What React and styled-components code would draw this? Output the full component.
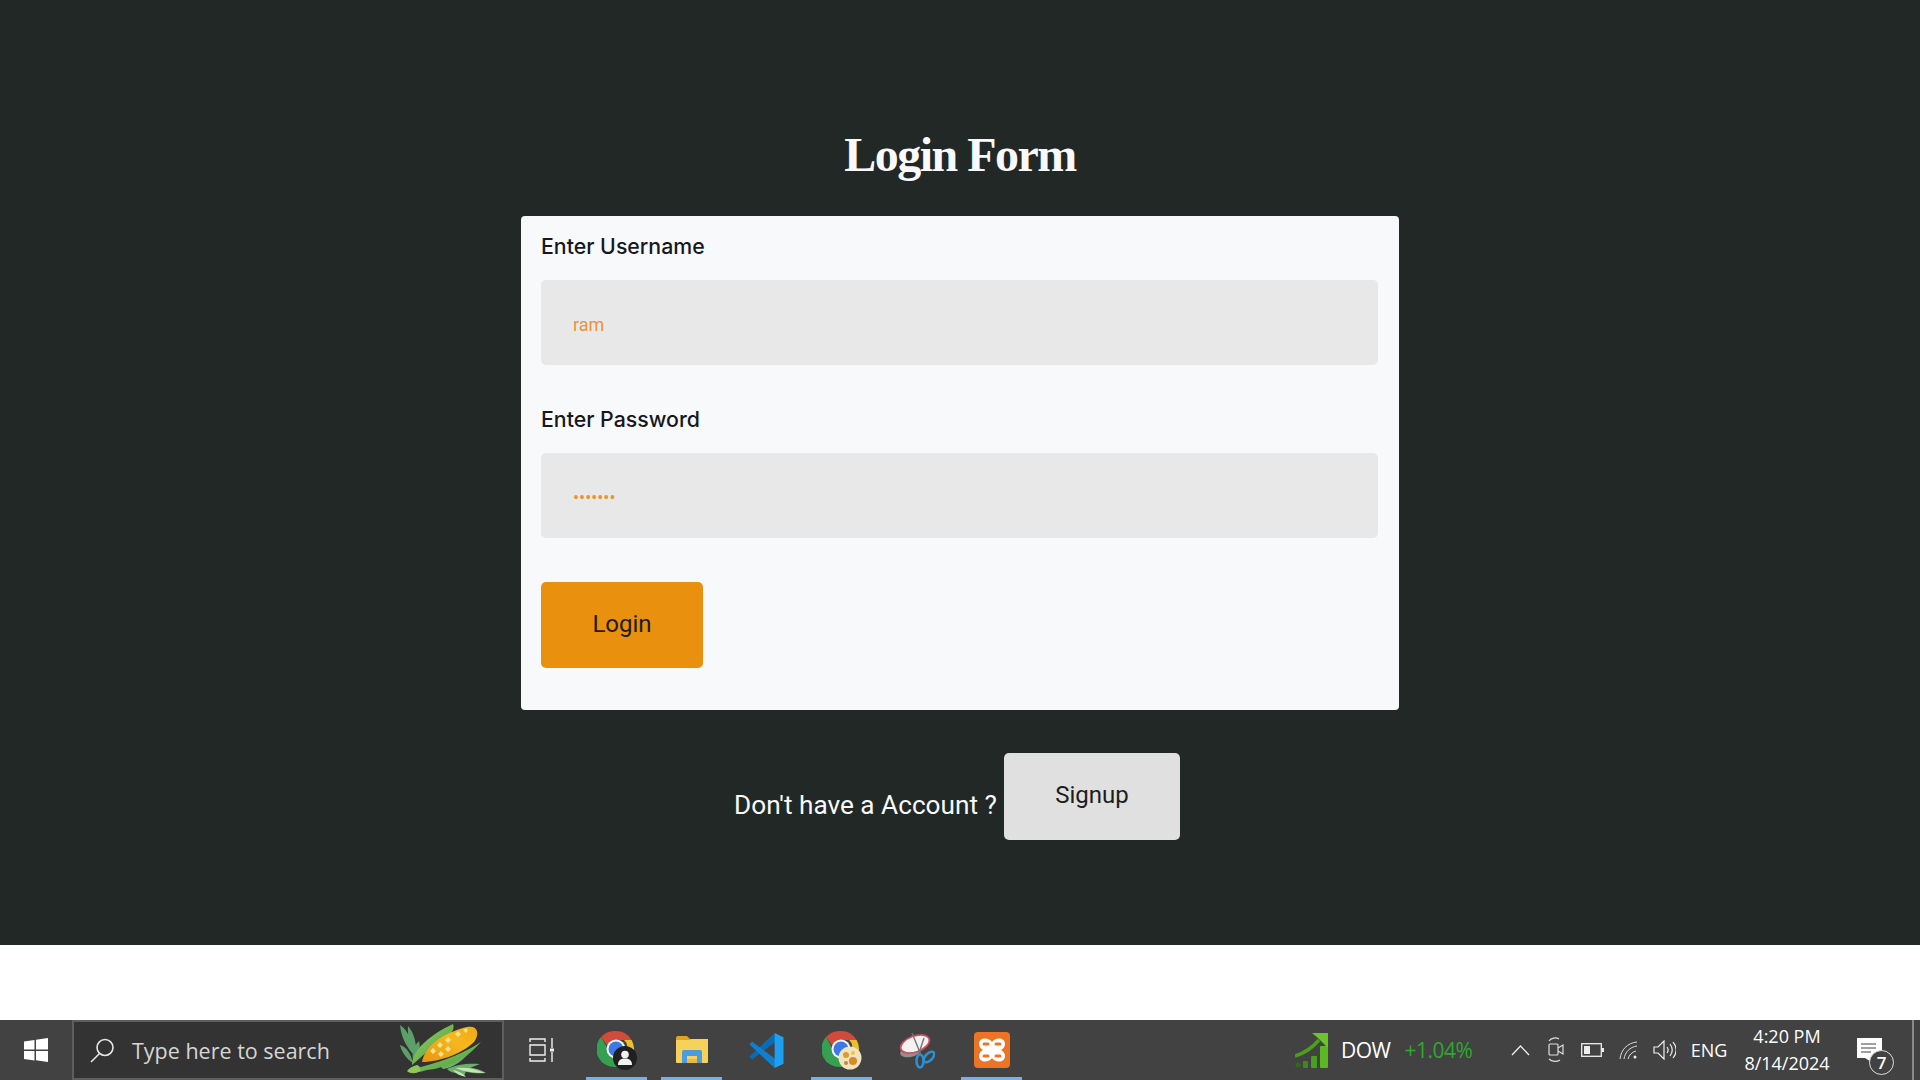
import styled, { createGlobalStyle } from "styled-components";

const GlobalStyle = createGlobalStyle`
  html, body {
    margin: 0;
    padding: 0;
    background: #fff;
  }
  * {
    box-sizing: border-box;
  }
`;

const Screen = styled.div`
  display: flex;
  flex-direction: column;
  width: 1920px;
  height: 1080px;
  overflow: hidden;
  background: #fff;
`;

const Page = styled.main`
  display: flex;
  flex-direction: column;
  align-items: center;
  height: 945px;
  padding-top: 125px;
  background: #222826;
`;

const Title = styled.h1`
  margin: 0 0 31px;
  height: 60px;
  font-family: "Liberation Serif", serif;
  font-weight: 700;
  font-size: 48px;
  line-height: 60px;
  letter-spacing: -1.5px;
  color: #f8f9fa;
`;

const Card = styled.form`
  display: flex;
  flex-direction: column;
  align-items: flex-start;
  width: 878px;
  padding: 14px 20px 42px;
  background: #f8f9fb;
  border-radius: 4px;
`;

const Label = styled.label`
  height: 32px;
  margin-bottom: 18px;
  font-family: Inter, sans-serif;
  font-weight: 500;
  font-size: 21.3px;
  line-height: 32px;
  color: #16181d;
`;

const Input = styled.input`
  display: block;
  width: 837px;
  height: 85px;
  margin-bottom: ${(p) => p.$gap}px;
  padding: 4px 32px 0;
  border: 0;
  outline: 0;
  border-radius: 5px;
  background: #e8e8e8;
  font-family: Roboto, sans-serif;
  font-size: 18px;
  color: #e8943a;
`;

const Button = styled.button`
  width: ${(p) => p.$width}px;
  height: ${(p) => p.$height}px;
  padding: 0 0 ${(p) => p.$lift}px;
  border: 0;
  border-radius: 5px;
  background: ${(p) => p.$bg};
  font-family: Roboto, sans-serif;
  font-size: 24px;
  color: #1d1d1b;
`;

const SignupRow = styled.div`
  display: flex;
  align-items: center;
  gap: 7px;
  margin-top: 43px;
  padding-right: 6px;
`;

const SignupText = styled.span`
  padding-top: 16px;
  font-family: Roboto, sans-serif;
  font-size: 26.2px;
  line-height: 32px;
  color: #f8f9fa;
`;

const Gap = styled.div`
  height: 75px;
`;

const Taskbar = styled.footer`
  display: flex;
  align-items: stretch;
  height: 60px;
  background: #424242;
  color: #fff;
`;

const StartButton = styled.div`
  display: flex;
  align-items: center;
  justify-content: center;
  width: 72px;
`;

const SearchBox = styled.div`
  display: flex;
  align-items: center;
  width: 432px;
  padding-left: 16px;
  border: 2px solid #5e5e5e;
  background: #333;
`;

const SearchText = styled.span`
  flex: 1;
  margin-left: 17px;
  font-family: "Open Sans", sans-serif;
  font-size: 21.5px;
  color: #d6d6d6;
`;

const CornWrap = styled.div`
  display: flex;
  margin-right: 7px;
`;

const TaskSlot = styled.div`
  position: relative;
  display: flex;
  align-items: center;
  justify-content: center;
  width: ${(p) => p.$width || 75}px;
  &::after {
    content: "";
    display: ${(p) => (p.$open ? "block" : "none")};
    position: absolute;
    left: 7px;
    right: 7px;
    bottom: 0;
    height: 3px;
    background: #76b0e8;
  }
`;

const Tray = styled.div`
  display: flex;
  align-items: stretch;
  margin-left: auto;
`;

const Widget = styled.div`
  display: flex;
  align-items: center;
  width: 217px;
  padding-left: 10px;
  font-family: "Open Sans", sans-serif;
  font-size: 21px;
`;

const WidgetName = styled.span`
  margin-left: 12px;
  letter-spacing: -0.5px;
`;

const WidgetValue = styled.span`
  margin-left: 14px;
  color: #2ea82e;
  letter-spacing: -0.5px;
`;

const TrayIcon = styled.div`
  display: flex;
  align-items: center;
  justify-content: center;
  width: ${(p) => p.$width || 36}px;
  font-family: "Open Sans", sans-serif;
  font-size: 18px;
`;

const Clock = styled.div`
  display: flex;
  flex-direction: column;
  align-items: center;
  justify-content: center;
  width: 102px;
  font-family: "Open Sans", sans-serif;
  font-size: 18px;
  line-height: 27px;
`;

const Notify = styled.div`
  position: relative;
  width: 74px;
  padding: 18px 0 0 19px;
`;

const Badge = styled.span`
  position: absolute;
  left: 31px;
  top: 30px;
  display: flex;
  align-items: center;
  justify-content: center;
  width: 25px;
  height: 25px;
  border: 1.5px solid #ddd;
  border-radius: 50%;
  background: #424242;
  font-family: "Open Sans", sans-serif;
  font-size: 17px;
  font-weight: 600;
`;

const DesktopEdge = styled.div`
  width: 2px;
  margin-right: 6px;
  background: #8a8a8a;
`;

function WindowsLogo() {
  return (
    <svg width="24" height="24" viewBox="0 0 24 24" fill="#fff">
      <path d="M0 3.5 10.5 2v9.6H0zM12 1.8 24 0v11.6H12zM0 13h10.5v9.5L0 21zM12 13h12v11l-12-1.8z" />
    </svg>
  );
}

function SearchGlass() {
  return (
    <svg width="25" height="25" viewBox="0 0 25 25" fill="none" stroke="#e6e6e6" strokeWidth="1.6">
      <circle cx="15" cy="9.5" r="8" />
      <path d="M9.5 15.5 1 24" />
    </svg>
  );
}

function Corn() {
  return (
    <svg width="100" height="60" viewBox="0 0 100 60">
      <defs>
        <linearGradient id="cob" x1="0" y1="1" x2="1" y2="0">
          <stop offset="0" stopColor="#e8960f" />
          <stop offset="0.6" stopColor="#f5b81e" />
          <stop offset="1" stopColor="#f0a818" />
        </linearGradient>
        <linearGradient id="husk" x1="0" y1="0" x2="1" y2="1">
          <stop offset="0" stopColor="#9fd36a" />
          <stop offset="1" stopColor="#3f9a3c" />
        </linearGradient>
      </defs>
      <path d="M5 5c8 5 12 16 14 30-7-7-13-18-14-30zM13 6c6 7 9 17 8 30-5-8-9-19-8-30zM5 25c7 2 11 9 13 18-6-4-11-10-13-18zM24 21c2 7 0 14-5 22-3-8-1-16 5-22z" fill="#5c9f68" />
      <path d="M17 45C17 30 36 14 58 4c3 7-5 12-14 18-10 8-18 15-27 23z" fill="url(#husk)" />
      <path d="M27 42C30 25 50 12 72 7c11-2 13 7 7 15C68 33 45 42 27 42z" fill="url(#cob)" />
      <path d="M38 28l3 3-3 3-3-3zM45 22l3 3-3 3-3-3zM46 31l3 3-3 3-3-3zM53 17l3 3-3 3-3-3zM53 26l3 3-3 3-3-3zM63 11l3 3-3 3-3-3zM71 8l2 2-2 3-3-3z" fill="#f9e08a" />
      <path d="M56 38c8-3 16-9 23-9l-12 11c-5 4-11 8-19 9l-3-3zM52 49c10-5 22-6 33-5l-13 5-3 7-7-3c-3 0-7-1-10-4zM60 47c10 0 22 0 31 6-10 1-22 0-31-6z" fill="#6cae6a" />
      <path d="M60 48c10-1 20 0 30 5-10 0-20-1-30-5zM58 50c5 1 10 3 13 7-5-1-10-3-13-7z" fill="#c4e4b8" />
      <path d="M13 50C28 47 60 39 86 22 72 38 52 48 32 50c-6 2-13 4-19 0z" fill="url(#husk)" />
      <path d="M12 51c2-3 6-5 10-6 3 1 4 4 3 6-4 3-10 3-13 0z" fill="#8ec95c" />
    </svg>
  );
}

function TaskView() {
  return (
    <svg width="26" height="24" viewBox="0 0 26 24" fill="none" stroke="#f0f0f0" strokeWidth="1.4">
      <path d="M1 4V1h15v3M1 20v3h15v-3M1 7h15v10H1zM23 0v10M23 14v10" />
      <rect x="21" y="10.5" width="4" height="3" fill="#f0f0f0" stroke="none" />
    </svg>
  );
}

function Chrome({ badge }) {
  return (
    <svg width="40" height="40" viewBox="0 0 40 40">
      <path d="M19 1a18 18 0 0 1 15.6 9H19a9 9 0 0 0-8.4 6L4 7A18 18 0 0 1 19 1z" fill="#d24a3c" />
      <path d="M34.6 10A18 18 0 0 1 21 37l7-14a9 9 0 0 0-1-13z" fill="#edbf2c" />
      <path d="M4 7l8 14a9 9 0 0 0 9 7l-1 9h-1A18 18 0 0 1 4 7z" fill="#359f52" />
      <circle cx="19" cy="19" r="9.5" fill="#f6f6f6" />
      <circle cx="19" cy="19" r="7.5" fill="#3d78e6" />
      {badge === "person" ? (
        <g>
          <circle cx="28" cy="28" r="12" fill="#202020" />
          <circle cx="28" cy="24.5" r="3.8" fill="#f2f2f2" />
          <path d="M21 35c0-5 3-6.5 7-6.5s7 1.5 7 6.5z" fill="#f2f2f2" />
        </g>
      ) : (
        <g>
          <circle cx="28" cy="28" r="11.5" fill="#efe3c0" />
          <circle cx="24" cy="25" r="3" fill="#e09a2a" />
          <circle cx="31" cy="31" r="4" fill="#d98a22" />
          <circle cx="31" cy="23" r="2" fill="#f2c14a" />
          <circle cx="24" cy="33" r="2" fill="#c9882e" />
        </g>
      )}
    </svg>
  );
}

function FolderIcon() {
  return (
    <svg width="32" height="28" viewBox="0 0 32 28">
      <path d="M0 2a2 2 0 0 1 2-2h9l3 3h18v5H0z" fill="#dfa51f" />
      <path d="M0 4h13l3-1h16v23a1 1 0 0 1-1 1H1a1 1 0 0 1-1-1z" fill="#f7d25a" />
      <path d="M6 27V16a2 2 0 0 1 2-2h16a2 2 0 0 1 2 2v11h-5v-7H11v7z" fill="#4a9be0" />
      <rect x="11" y="23" width="10" height="4" fill="#e9b93d" />
    </svg>
  );
}

function VsCode() {
  return (
    <svg width="37" height="37" viewBox="0 0 100 100">
      <path d="M72 3 4 66l7 8L74 27z" fill="#0a6cb5" />
      <path d="M4 34l7-8 63 47-2 24z" fill="#107fcf" />
      <path d="M72 3l24 11v72L72 97z" fill="#1f9ff0" />
    </svg>
  );
}

function Snip() {
  return (
    <svg width="36" height="38" viewBox="0 0 36 38" fill="none">
      <ellipse cx="11" cy="21" rx="10" ry="5" transform="rotate(-10 11 21)" fill="#8f8f8f" />
      <ellipse cx="16" cy="13" rx="15" ry="8" transform="rotate(-20 16 13)" fill="#f4f1f1" stroke="#c9505f" strokeWidth="1.8" />
      <path d="M13 2l9 22M25 7l-6 18" stroke="#777" strokeWidth="1.4" />
      <ellipse cx="21" cy="30" rx="3.5" ry="6.5" stroke="#2b8fd0" strokeWidth="2.6" />
      <ellipse cx="30" cy="26" rx="3.5" ry="6.5" transform="rotate(45 30 26)" stroke="#2b8fd0" strokeWidth="2.6" />
    </svg>
  );
}

function Xampp() {
  return (
    <svg width="36" height="36" viewBox="0 0 36 36" fill="none">
      <rect width="36" height="36" rx="4" fill="#ec7424" />
      <path d="M18 10c3-5 13-5 13 2 0 3-2 5-4 6 2 1 4 3 4 6 0 7-10 7-13 2-3 5-13 5-13-2 0-3 2-5 4-6-2-1-4-3-4-6 0-7 10-7 13-2z" fill="#fff" />
      <path d="M10 12h4M22 12h4M10 24h4M22 24h4" stroke="#ec7424" strokeWidth="3" strokeLinecap="round" />
    </svg>
  );
}

function DowArrow() {
  return (
    <svg width="34" height="36" viewBox="0 0 34 36">
      <circle cx="3" cy="33" r="2.5" fill="#2c6b14" />
      <rect x="8" y="29" width="5" height="7" rx="1" fill="#3c8a1a" />
      <rect x="16" y="24" width="6" height="12" rx="1" fill="#46a01c" />
      <rect x="25" y="14" width="8" height="22" rx="1" fill="#5ab922" />
      <path d="M0 24C10 21 18 15 24 8" fill="none" stroke="#4c9e1c" strokeWidth="3.5" />
      <path d="M17 1h16v15l-5-5-5-5z" fill="#6cc42a" />
    </svg>
  );
}

function Chevron() {
  return (
    <svg width="19" height="11" viewBox="0 0 19 11" fill="none" stroke="#eee" strokeWidth="1.3">
      <path d="M1 10 9.5 1 18 10" />
    </svg>
  );
}

function MeetNow() {
  return (
    <svg width="18" height="26" viewBox="0 0 18 26" fill="none" stroke="#ddd" strokeWidth="1.2">
      <path d="M2 4C4 1 9 0 12 2M2 22c3 3 8 3 11 1" />
      <rect x="2" y="7" width="9" height="11" rx="1" />
      <path d="M11 11l5-3v9l-5-3" />
    </svg>
  );
}

function Battery() {
  return (
    <svg width="23" height="14" viewBox="0 0 23 14" fill="none">
      <rect x=".7" y=".7" width="19.6" height="12.6" stroke="#eee" strokeWidth="1.3" />
      <rect x="3" y="3" width="6" height="8" fill="#eee" />
      <rect x="21" y="5" width="2" height="4" fill="#eee" />
    </svg>
  );
}

function Wifi() {
  return (
    <svg width="19" height="19" viewBox="0 0 19 19" fill="none" stroke="#ddd" strokeWidth="1">
      <path d="M1 18C2 9 8 2 18 1M5 18C6 11 11 6 18 5M9 18c1-4 4-7 8-8" />
      <circle cx="16" cy="16" r="1.5" fill="#eee" stroke="none" />
    </svg>
  );
}

function Volume() {
  return (
    <svg width="23" height="20" viewBox="0 0 23 20" fill="none" stroke="#eee" strokeWidth="1.2">
      <path d="M1 7h4l6-6v18l-6-6H1z" />
      <path d="M14 7c1.5 2 1.5 4 0 6M17 4c3 4 3 8 0 12M20 2c4 5 4 11 0 16" />
    </svg>
  );
}

function Message() {
  return (
    <svg width="25" height="27" viewBox="0 0 25 27">
      <path d="M0 0h25v20H13l6 7-11-7H0z" fill="#fff" />
      <path d="M4 6h15M4 10h15M4 14h10" stroke="#424242" strokeWidth="1.2" />
    </svg>
  );
}

export default function App() {
  return (
    <>
      <GlobalStyle />
      <Screen>
        <Page>
          <Title>Login Form</Title>
          <Card>
            <Label htmlFor="username">Enter Username</Label>
            <Input id="username" $gap={38} defaultValue="ram" />
            <Label htmlFor="password">Enter Password</Label>
            <Input id="password" $gap={44} type="password" defaultValue="1234567" />
            <Button type="button" $width={162} $height={86} $lift={2} $bg="#ea900f">Login</Button>
          </Card>
          <SignupRow>
            <SignupText>Don't have a Account ?</SignupText>
            <Button type="button" $width={176} $height={87} $lift={3} $bg="#e0e0e0">Signup</Button>
          </SignupRow>
        </Page>
        <Gap />
        <Taskbar>
          <StartButton><WindowsLogo /></StartButton>
          <SearchBox>
            <SearchGlass />
            <SearchText>Type here to search</SearchText>
            <CornWrap><Corn /></CornWrap>
          </SearchBox>
          <TaskSlot $width={75}><TaskView /></TaskSlot>
          <TaskSlot $open><Chrome badge="person" /></TaskSlot>
          <TaskSlot $open><FolderIcon /></TaskSlot>
          <TaskSlot><VsCode /></TaskSlot>
          <TaskSlot $open><Chrome badge="photo" /></TaskSlot>
          <TaskSlot><Snip /></TaskSlot>
          <TaskSlot $open><Xampp /></TaskSlot>
          <Tray>
            <Widget>
              <DowArrow />
              <WidgetName>DOW</WidgetName>
              <WidgetValue>+1.04%</WidgetValue>
            </Widget>
            <TrayIcon><Chevron /></TrayIcon>
            <TrayIcon><MeetNow /></TrayIcon>
            <TrayIcon><Battery /></TrayIcon>
            <TrayIcon><Wifi /></TrayIcon>
            <TrayIcon><Volume /></TrayIcon>
            <TrayIcon $width={54}>ENG</TrayIcon>
            <Clock>
              <span>4:20 PM</span>
              <span>8/14/2024</span>
            </Clock>
            <Notify>
              <Message />
              <Badge>7</Badge>
            </Notify>
            <DesktopEdge />
          </Tray>
        </Taskbar>
      </Screen>
    </>
  );
}
